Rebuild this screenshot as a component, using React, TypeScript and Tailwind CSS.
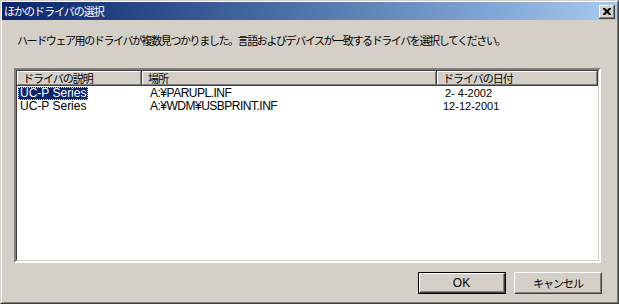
import React from "react";

const JP = "font-['Noto_Sans_CJK_JP',sans-serif] text-[11px] tracking-[-1px] leading-[14px]";
const LAT = "font-['Liberation_Sans','Noto_Sans_CJK_JP',sans-serif]";

function HeaderCell({ w, label }: { w: string; label: string }) {
  return (
    <div className={`${w} h-[15px] border-r border-b border-r-[#404040] border-b-[#404040] bg-[#d4d0c8]`}>
      <div className="h-full border border-t-white border-l-white border-r-[#808080] border-b-[#808080] flex items-center pl-[5px]">
        <span className={`${JP} text-black`}>{label}</span>
      </div>
    </div>
  );
}

export default function App() {
  return (
    <div className="w-[619px] h-[304px] bg-[#d4d0c8] border border-t-[#d4d0c8] border-l-[#d4d0c8] border-r-[#404040] border-b-[#404040]">
      <div className="h-full border border-t-white border-l-white border-r-[#808080] border-b-[#808080] flex flex-col">
        {/* Title bar */}
        <div className="h-[18px] flex items-center justify-between bg-gradient-to-r from-[#0a246a] to-[#a6caf0] pl-[2px] pr-[2px]">
          <span className={`${JP} text-white`}>ほかのドライバの選択</span>
          <div className="w-[16px] h-[14px] bg-[#d4d0c8] border-r border-b border-r-[#404040] border-b-[#404040] mt-[1px]">
            <div className="w-full h-full border border-t-white border-l-white border-r-[#808080] border-b-[#808080] flex items-center justify-center">
              <svg width="8" height="7" viewBox="0 0 8 7">
                <path d="M0 0h2l2 2 2-2h2v1l-2.5 2.5L8 6v1H6L4 5 2 7H0V6l2.5-2.5L0 1z" fill="#000" />
              </svg>
            </div>
          </div>
        </div>

        {/* Instruction */}
        <div className="font-['Noto_Sans_CJK_JP',sans-serif] text-[11px] tracking-[-1.4px] leading-[14px] text-black mt-[13px] pl-[15px]">
          ハードウェア用のドライバが複数見つかりました。言語およびデバイスが一致するドライバを選択してください。
        </div>

        {/* List view */}
        <div className="mt-[21px] ml-[12px] w-[587px] h-[195px] border-2 border-t-[#808080] border-l-[#808080] border-r-white border-b-white">
          <div className="w-full h-full border border-t-[#404040] border-l-[#404040] border-r-[#d4d0c8] border-b-[#d4d0c8] bg-white flex flex-col">
            <div className="flex">
              <HeaderCell w="w-[125px]" label="ドライバの説明" />
              <HeaderCell w="w-[295px]" label="場所" />
              <HeaderCell w="w-[161px]" label="ドライバの日付" />
            </div>
            <div className={`pt-[1px] flex flex-col text-black ${LAT} leading-[13px]`}>
              <div className="flex h-[13px] items-center">
                <div className="w-[125px] h-[13px] pl-[1px] flex items-center text-[12px]">
                  <span className="block h-[13px] leading-[13px] px-[2px] bg-[#0a246a] text-white outline outline-1 outline-dotted outline-[#d4d0c8] -outline-offset-1">
                    UC-P Series
                  </span>
                </div>
                <div className="w-[295px] h-[13px] pl-[8px] flex items-center text-[12px] tracking-[-0.5px]">A:¥PARUPL.INF</div>
                <div className="w-[161px] h-[13px] pl-[8px] flex items-center text-[11px] whitespace-pre">2- 4-2002</div>
              </div>
              <div className="flex h-[13px] items-center">
                <div className="w-[125px] h-[13px] pl-[3px] flex items-center text-[12px]">UC-P Series</div>
                <div className="w-[295px] h-[13px] pl-[8px] flex items-center text-[12px] tracking-[-0.5px]">A:¥WDM¥USBPRINT.INF</div>
                <div className="w-[161px] h-[13px] pl-[6px] flex items-center text-[11px]">12-12-2001</div>
              </div>
            </div>
          </div>
        </div>

        {/* Buttons */}
        <div className="mt-[9px] flex justify-end gap-[8px] pr-[15px]">
          <div className="w-[88px] h-[22px] border border-black">
            <div className="w-full h-full border border-t-white border-l-white border-r-[#404040] border-b-[#404040]">
              <div className="w-full h-full border-r border-b border-r-[#808080] border-b-[#808080] flex items-center justify-center">
                <span className={`${LAT} text-[12px] text-black`}>OK</span>
              </div>
            </div>
          </div>
          <div className="w-[88px] h-[22px] border border-t-white border-l-white border-r-[#404040] border-b-[#404040]">
            <div className="w-full h-full border border-t-[#d4d0c8] border-l-[#d4d0c8] border-r-[#808080] border-b-[#808080] flex items-center justify-center">
              <span className={`${JP} text-black`}>キャンセル</span>
            </div>
          </div>
        </div>
      </div>
    </div>
  );
}
